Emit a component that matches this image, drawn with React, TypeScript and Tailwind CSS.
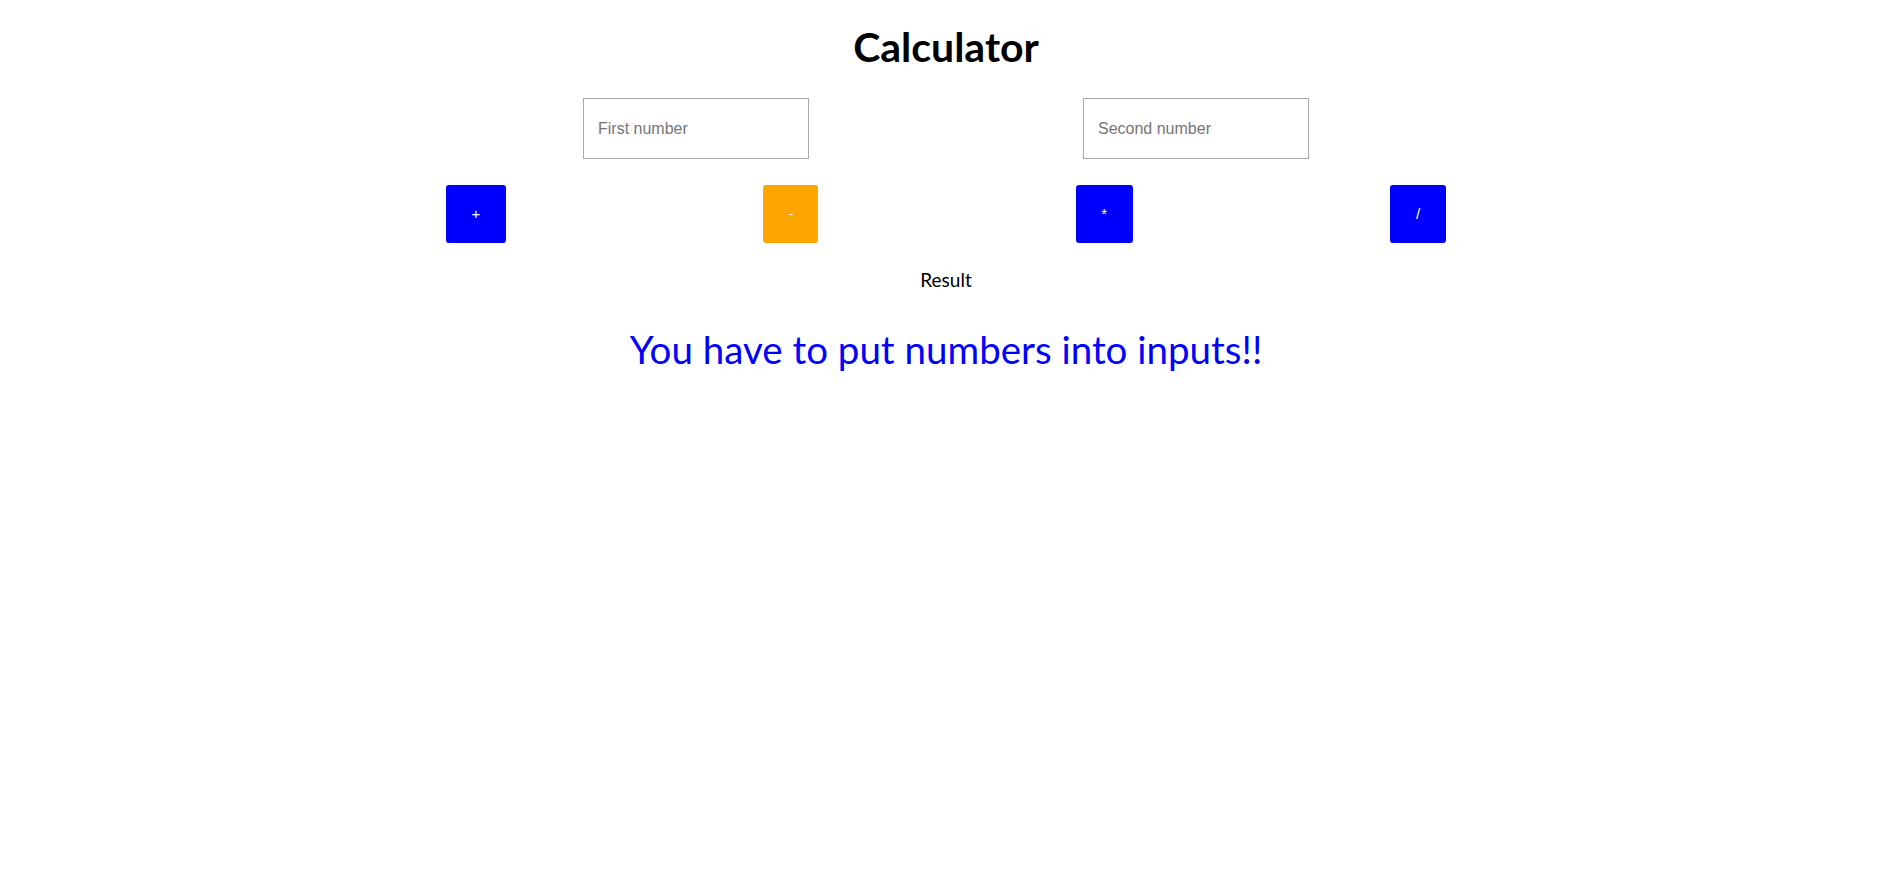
import React from "react";

const ops = [
  { label: "+", cls: "bg-[#0000ff] w-[60px]" },
  { label: "-", cls: "bg-[#ffa500] w-[55px]" },
  { label: "*", cls: "bg-[#0000ff] w-[57px]" },
  { label: "/", cls: "bg-[#0000ff] w-[56px]" },
];

const App: React.FC = () => {
  return (
    <div className="min-h-screen bg-white flex justify-center pr-[7px] font-['Lato','DejaVu_Sans',sans-serif]">
      <div className="w-[1000px] flex flex-col items-center">
        {/* Title */}
        <h1 className="pt-[23px] text-[41px] leading-[48px] font-bold text-black">
          Calculator
        </h1>

        {/* Inputs */}
        <div className="mt-[27px] w-full flex justify-around">
          <input
            type="text"
            placeholder="First number"
            className="w-[226px] h-[61px] border border-[#a9a9a9] pl-[14px] text-[16px] font-['Liberation_Sans',Arial,sans-serif] text-black placeholder:text-[#757575] outline-none"
          />
          <input
            type="text"
            placeholder="Second number"
            className="w-[226px] h-[61px] border border-[#a9a9a9] pl-[14px] text-[16px] font-['Liberation_Sans',Arial,sans-serif] text-black placeholder:text-[#757575] outline-none"
          />
        </div>

        {/* Operation buttons */}
        <div className="mt-[26px] w-full flex justify-between">
          {ops.map((op) => (
            <button
              key={op.label}
              className={`${op.cls} h-[58px] rounded-[3px] text-white text-[15px] font-['Liberation_Sans',Arial,sans-serif] flex items-center justify-center`}
            >
              {op.label}
            </button>
          ))}
        </div>

        {/* Result */}
        <div className="mt-[25px] text-[19px] leading-[23px] text-black">Result</div>

        {/* Message */}
        <div className="mt-[35px] text-[38.5px] leading-[46px] text-[#0000ff]">
          You have to put numbers into inputs!!
        </div>
      </div>
    </div>
  );
};

export default App;
